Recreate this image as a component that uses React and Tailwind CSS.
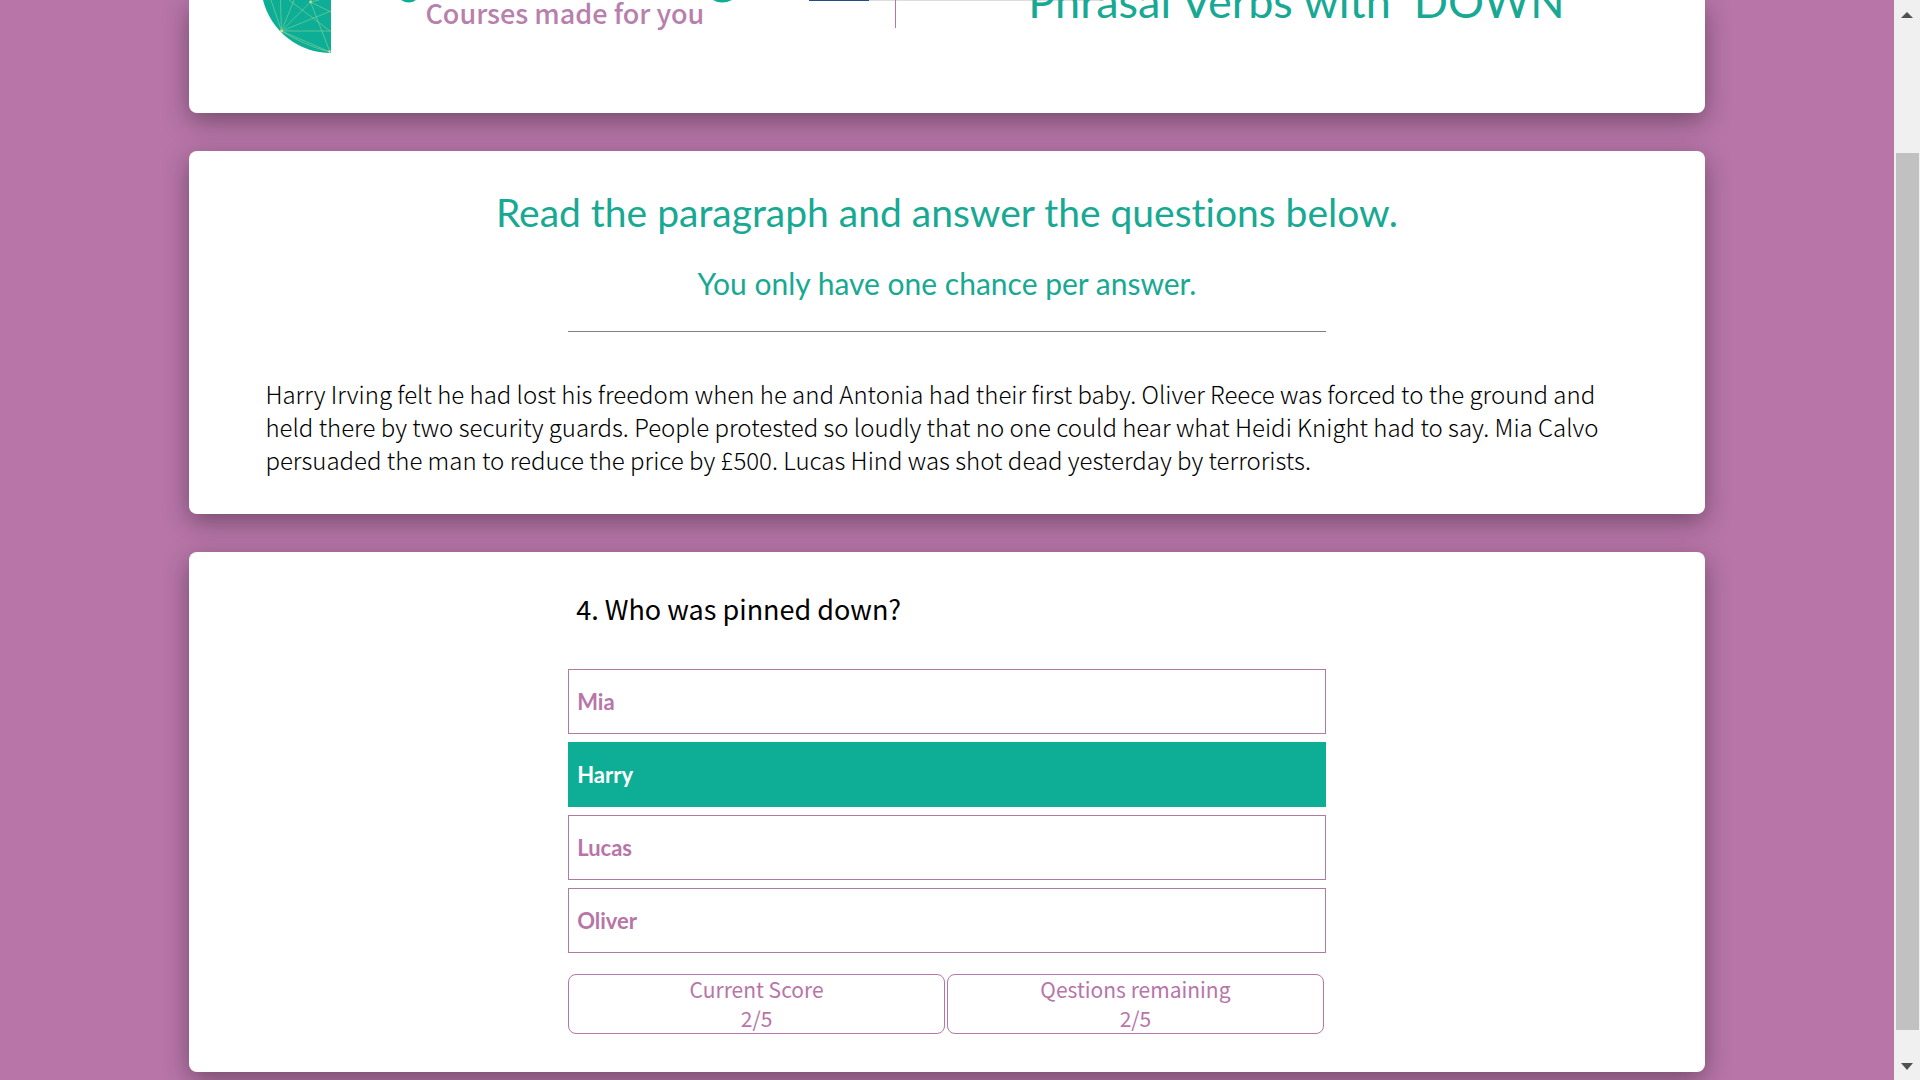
import { useState } from "react";

const card = "w-4/5 bg-white shadow-[0_8px_26px_0_rgba(0,0,0,0.36)]";

const options = ["Mia", "Harry", "Lucas", "Oliver"];

const scores = [
  { label: "Current Score", value: "2/5" },
  { label: "Qestions remaining", value: "2/5" },
];

function LogoMark() {
  return (
    <svg className="h-[53px] w-[70px] shrink-0" viewBox="0 0 70 53" aria-hidden="true">
      <path d="M2 0A70 70 0 0 0 70 53V0Z" fill="#0dae95" />
      <g stroke="#8ed39a" strokeWidth="0.6" fill="none">
        <path d="M20.500 31L19.500 0M20.500 31L33 0M20.500 31L49.500 2L51 0M20.500 31L70 11M20.500 31H70M20.500 31L69 52M20.500 31Q45 46 69 52" />
        <path d="M49.500 2L69 52M49.500 2L70 12M28 0L69 31M10 0L20.500 31M58 0L49.500 2M49 0L49.500 2" />
      </g>
      <g fill="#cfe3a0">
        <circle cx="20.500" cy="31" r="1.500" />
        <circle cx="49.500" cy="2" r="1.200" />
        <circle cx="68.500" cy="51.500" r="1.200" />
      </g>
    </svg>
  );
}

function Header() {
  return (
    <header className={`${card} flex h-[113px] shrink-0 items-start overflow-hidden rounded-b-lg pl-[72px]`}>
      <LogoMark />
      <div className="ml-[70px] flex w-[333px] shrink-0 flex-col pl-6">
        <svg className="-ml-6 h-[3px] w-[333px] shrink-0" viewBox="0 0 333 3" aria-hidden="true">
          <path d="M0 0Q8 5 15 0ZM312 0Q321 5 331 0Z" fill="#0dae95" />
        </svg>
        <p className="-mt-2.5 whitespace-nowrap text-[27px] font-medium leading-[40px] text-[#b880ac]">
          Courses made for you
        </p>
      </div>
      <div className="ml-[75px] flex h-px flex-1">
        <div className="h-px w-[60px] shrink-0 bg-[#1f4e86]" />
        <div className="-mr-[270px] h-px w-[235px] shrink-0 bg-[#dddddd]" />
      </div>
      <div className="h-7 w-px bg-[#b775a8]" />
      <h1 className="-mt-[35px] ml-[132px] mr-[140px] shrink-0 whitespace-pre font-['Lato',sans-serif] text-[45px] leading-[72px] text-[#17a993]">
        {"Phrasal Verbs with \u00a0DOWN"}
      </h1>
    </header>
  );
}

function Scrollbar() {
  return (
    <aside className="flex w-[26px] shrink-0 flex-col items-center bg-[#f0f0f0]" aria-hidden="true">
      <svg className="mt-3 h-1.5 w-3 shrink-0" viewBox="0 0 12 6">
        <path d="M0 6L6 0L12 6Z" fill="#505050" />
      </svg>
      <div className="mb-[33px] mt-[135px] w-[23px] flex-1 bg-[#c1c1c1]" />
      <svg className="mb-2.5 h-[7px] w-3 shrink-0" viewBox="0 0 12 7">
        <path d="M0 0H12L6 7Z" fill="#505050" />
      </svg>
    </aside>
  );
}

export default function App() {
  const [selected, setSelected] = useState("Harry");
  return (
    <div className="flex h-screen overflow-hidden bg-[#b775a8] font-['Noto_Sans_CJK_SC',sans-serif]">
      <main className="flex min-w-0 flex-1 flex-col items-center gap-[38px]">
        <Header />

        <section className={`${card} shrink-0 rounded-lg px-[76px] pb-[38px] pt-[35px] text-black`}>
          <div className="text-center font-['Lato',sans-serif] text-[#17a993]">
            <h2 className="text-[39px] leading-[52px] [font-variant-ligatures:none]">
              Read the paragraph and answer the questions below.
            </h2>
            <h3 className="mt-[19px] text-[30px] leading-[52px]">
              You only have one chance per answer.
            </h3>
          </div>
          <hr className="mx-auto mb-[45px] mt-[22px] w-[758px] max-w-full border-t border-[#808080]" />
          <p className="text-[24px] font-light leading-[33px]">
            Harry Irving felt he had lost his freedom when he and Antonia had their first baby.
            Oliver Reece was forced to the ground and held there by two security guards. People
            protested so loudly that no one could hear what Heidi Knight had to say. Mia Calvo
            persuaded the man to reduce the price by £500. Lucas Hind was shot dead yesterday by
            terrorists.
          </p>
        </section>

        <section className={`${card} shrink-0 rounded-lg pb-[38px] pt-[35px]`}>
          <div className="mx-auto w-1/2">
            <h4 className="pl-2 text-[27px] leading-[44px] text-black">4. Who was pinned down?</h4>
            <div className="mt-[38px] flex flex-col gap-2">
              {options.map((name) => (
                <button
                  key={name}
                  type="button"
                  aria-pressed={selected === name}
                  onClick={() => setSelected(name)}
                  className={`h-[65px] border px-2 text-left font-['Lato',sans-serif] text-[22px] font-bold ${
                    selected === name
                      ? "border-[#0dae95] bg-[#0dae95] text-white"
                      : "border-[#b07ba3] bg-white text-[#b775a8]"
                  }`}
                >
                  {name}
                </button>
              ))}
            </div>
            <div className="mr-0.5 mt-[21px] flex gap-0.5">
              {scores.map((s) => (
                <div
                  key={s.label}
                  className="flex-1 rounded-lg border border-[#b775a8] text-center text-[21px] leading-[29px] text-[#b775a8]"
                >
                  <p>{s.label}</p>
                  <p>{s.value}</p>
                </div>
              ))}
            </div>
          </div>
        </section>
      </main>
      <Scrollbar />
    </div>
  );
}
